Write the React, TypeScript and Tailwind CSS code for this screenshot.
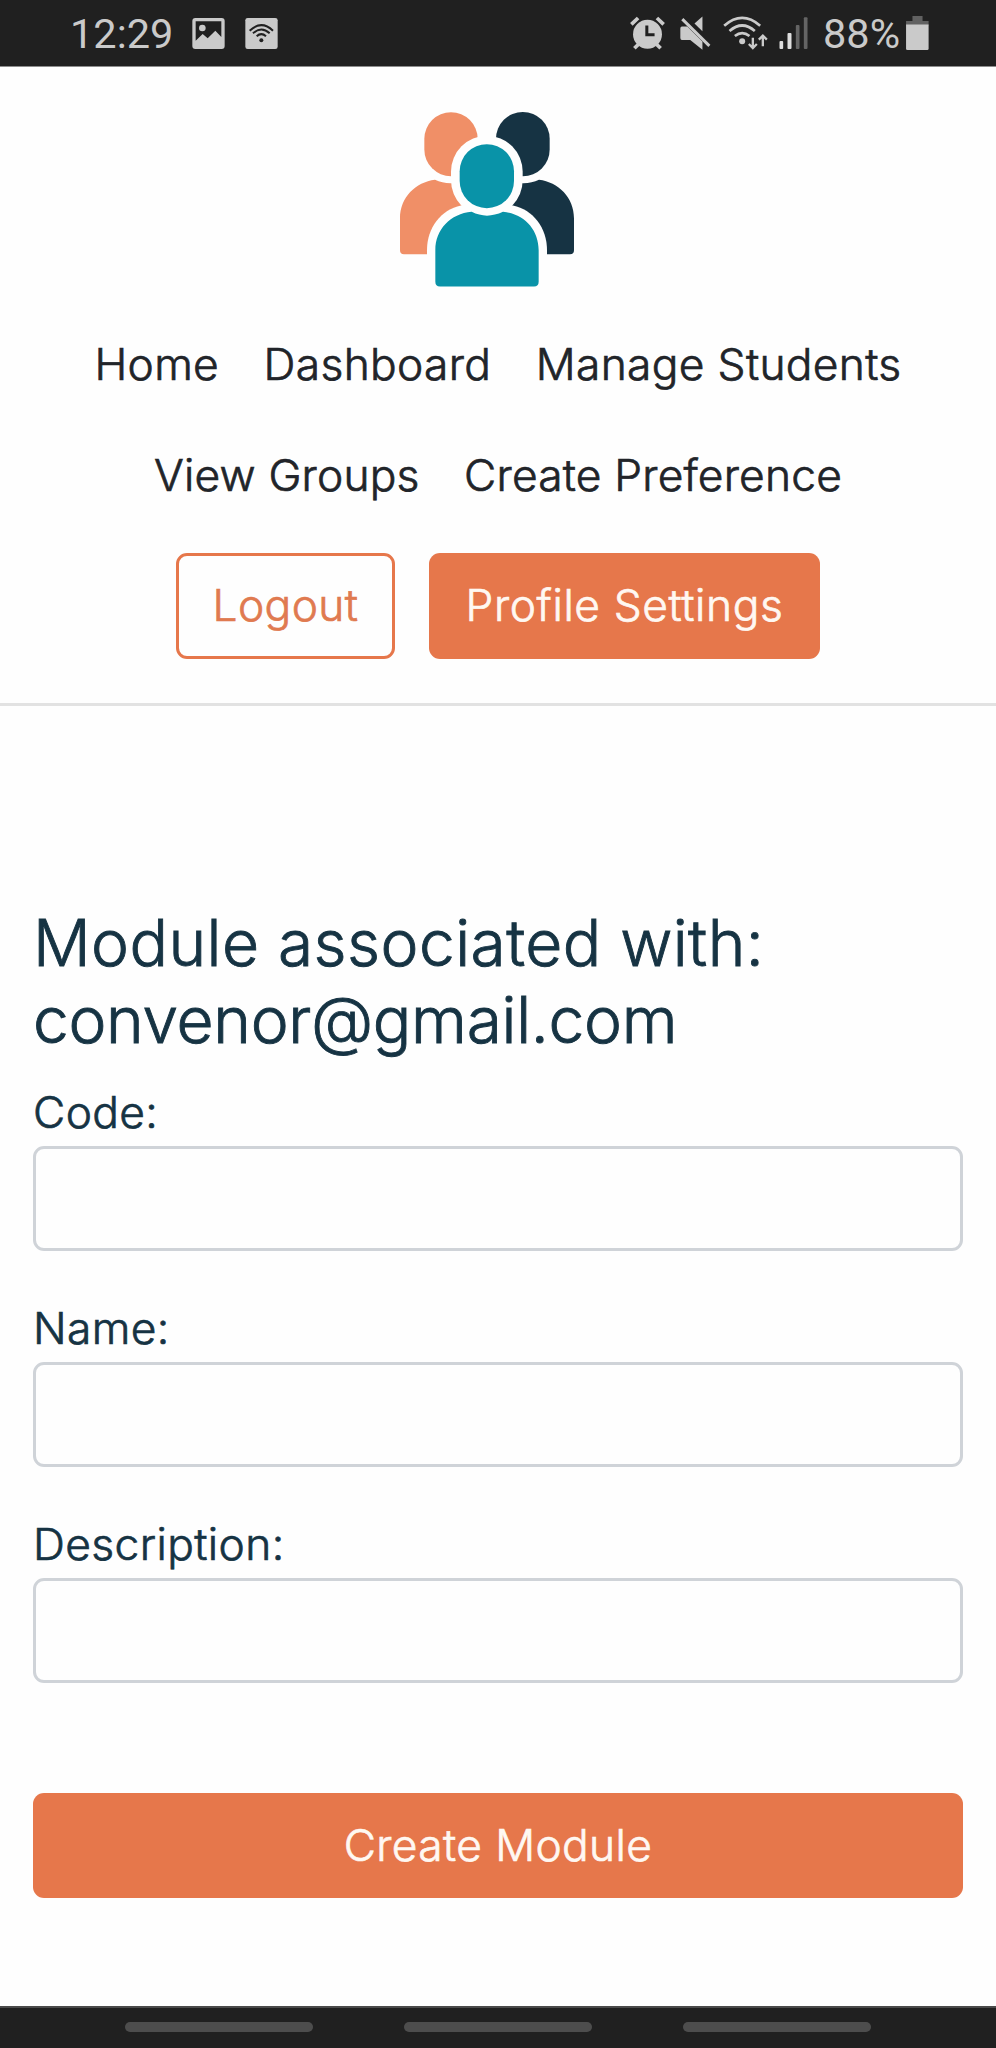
const navRows = [
  { items: ["Home", "Dashboard", "Manage Students"], tracking: "tracking-[0.35px]" },
  { items: ["View Groups", "Create Preference"], tracking: "tracking-[0.2px]" },
];

const fields = ["Code:", "Name:", "Description:"];

function Logo() {
  return (
    <svg viewBox="60 66 522 524" className="h-[175px] w-[174px]" aria-hidden="true">
      <g fill="#f08f67">
        <path d="M133 146a80 80 0 0 1 160 0v32a80 80 0 0 1-160 0z" />
        <path d="M60 385C60 322 107 276 165 269Q190 281 220 279L300 380L200 492H72Q60 492 60 480Z" />
      </g>
      <g fill="#163343">
        <path d="M348 146a80.500 80.500 0 0 1 161 0v32a80.500 80.500 0 0 1-161 0z" />
        <path d="M582 385C582 322 535 276 477 269Q452 281 422 279L342 380L442 492H570Q582 492 582 480Z" />
      </g>
      <path fill="#fefefe" d="M141 600V480C141 412 183 359 243 346H399C459 359 501 412 501 480V600Z" />
      <rect x="213" y="137" width="215" height="241" rx="107.500" fill="#fefefe" />
      <rect x="239" y="162" width="163" height="192" rx="81.500" fill="#0993a8" />
      <path
        fill="#0993a8"
        d="M166 480C166 418 211 371 275 365Q320 388 369 365C432 371 476 418 476 480V575Q476 589 462 589H180Q166 589 166 575Z"
      />
    </svg>
  );
}

function ImageIcon() {
  return (
    <svg viewBox="0 0 97 93" className="h-[31px] w-[33px]" aria-hidden="true">
      <path
        fill="#cacaca"
        fillRule="evenodd"
        d="M9 0H88Q97 0 97 9V84Q97 93 88 93H9Q0 93 0 84V9Q0 0 9 0ZM10 10V68L31 48L46 61L69 38L87 57V10Z"
      />
      <circle cx="30" cy="30" r="10" fill="#cacaca" />
    </svg>
  );
}

function WifiBadgeIcon() {
  return (
    <svg viewBox="0 0 97 93" className="h-[31px] w-[33px]" aria-hidden="true">
      <rect width="97" height="93" rx="7" fill="#cacaca" />
      <g fill="none" stroke="#202020" strokeWidth="6">
        <path d="M13 38Q48 5 83 38" />
        <path d="M23 46Q48 23 73 46" />
        <path d="M34 55Q48 42 62 55" />
      </g>
      <circle cx="48" cy="67" r="6" fill="#202020" />
    </svg>
  );
}

function AlarmIcon() {
  return (
    <svg viewBox="59 47 104 101" className="h-[34px] w-[35px]" aria-hidden="true">
      <circle cx="111" cy="101" r="43" fill="#cacaca" />
      <g stroke="#cacaca" strokeWidth="11">
        <path d="M63 72L83 53M159 72L139 53" />
        <path d="M85 130L72 143M137 130L150 143" />
      </g>
      <path d="M109 75V103H132" fill="none" stroke="#202020" strokeWidth="9" />
    </svg>
  );
}

function MuteIcon() {
  return (
    <svg viewBox="208 46 94 102" className="h-[34px] w-[31px]" aria-hidden="true">
      <path fill="#cacaca" d="M214 77H230L276 123V148L239 118H214Q209 118 209 112V83Q209 77 214 77Z" />
      <path fill="#cacaca" d="M276 47V92L252 68Z" />
      <path d="M215 55L297 136" stroke="#cacaca" strokeWidth="9" />
    </svg>
  );
}

function WifiIcon() {
  return (
    <svg viewBox="338 46 134 102" className="h-[34px] w-[45px]" aria-hidden="true">
      <g fill="none" stroke="#cacaca" strokeWidth="8">
        <path d="M341 75Q395 28 449 75" />
        <path d="M357 91Q395 58 433 91" />
        <path d="M373 106Q395 89 417 106" />
      </g>
      <circle cx="395" cy="122" r="9" fill="#cacaca" />
      <g fill="none" stroke="#cacaca" strokeWidth="7">
        <path d="M427 111V141M415 130L427 142L439 130" />
        <path d="M457 137V106M445 117L457 105L469 117" />
      </g>
    </svg>
  );
}

function SignalIcon() {
  return (
    <svg viewBox="506 52 86 96" className="h-[32px] w-[29px]" aria-hidden="true">
      <rect x="507" y="124" width="11" height="24" rx="3" fill="#dedede" />
      <rect x="531" y="100" width="12" height="48" rx="3" fill="#dedede" />
      <rect x="556" y="76" width="11" height="72" rx="3" fill="#646464" />
      <rect x="580" y="53" width="11" height="95" rx="3" fill="#646464" />
    </svg>
  );
}

function BatteryIcon() {
  return (
    <svg viewBox="884 47 68 101" className="h-[34px] w-[23px]" aria-hidden="true">
      <path fill="#616161" d="M903 47H933V62H951V75H884V62H903Z" />
      <path fill="#cacaca" d="M884 72H951V144Q951 148 947 148H888Q884 148 884 144Z" />
    </svg>
  );
}

function StatusBar() {
  return (
    <div className="flex h-[67px] shrink-0 items-center border-b border-[#8d8d8d] bg-[#202020] pr-[67px] pl-[70px] font-[Roboto,sans-serif] text-[#cacaca]">
      <span className="w-[122px] pt-[2px] text-[41.500px] leading-none">12:29</span>
      <div className="flex gap-[20px]">
        <ImageIcon />
        <WifiBadgeIcon />
      </div>
      <div className="ml-auto flex items-center">
        <AlarmIcon />
        <span className="ml-[15px] flex"><MuteIcon /></span>
        <span className="ml-[12px] flex"><WifiIcon /></span>
        <span className="ml-[11px] flex"><SignalIcon /></span>
        <span className="ml-[15px] w-[83px] pt-[2px] text-[41.500px] leading-none whitespace-nowrap">88%</span>
        <BatteryIcon />
      </div>
    </div>
  );
}

export default function App() {
  return (
    <div className="flex h-[2048px] w-[996px] flex-col overflow-hidden bg-[#fefefe] font-[Inter,sans-serif] text-[44.270px] font-light tracking-[0.4px] [-webkit-text-stroke:0.7px_currentColor]">
      <div className="shrink-0 font-normal tracking-normal [-webkit-text-stroke:0px]">
        <StatusBar />
      </div>
      <header className="flex h-[639px] shrink-0 flex-col border-b-[3px] border-[#e2e2e2] pt-[45px]">
        <div className="pl-[400px]">
          <Logo />
        </div>
        <nav className="mt-[22px] text-[#212429]">
          {navRows.map((row) => (
            <div
              key={row.items[0]}
              className={`flex h-[110.500px] items-center justify-center gap-[44.500px] ${row.tracking}`}
            >
              {row.items.map((item) => (
                <a key={item} href="#" className="whitespace-nowrap">
                  {item}
                </a>
              ))}
            </div>
          ))}
        </nav>
        <div className="mt-[23px] flex justify-center gap-[34px]">
          <button className="h-[106px] w-[219px] rounded-[11px] border-[3px] border-[#e6774b] pb-[2px] text-[#e07a50]">
            Logout
          </button>
          <button className="h-[106px] w-[391px] rounded-[11px] bg-[#e6774b] pb-[2px] tracking-[0.6px] text-[#fff8f2]">
            Profile Settings
          </button>
        </div>
      </header>
      <main className="flex grow flex-col px-[33px] pt-[199px] text-[#163343]">
        <h1 className="text-[64px] leading-[76.500px] tracking-normal [-webkit-text-stroke:0.9px_currentColor]">
          <span className="tracking-[0.45px]">Module associated with:</span>
          <br />
          <span className="tracking-[-0.3px]">convenor@gmail.com</span>
        </h1>
        <form className="mt-[21px] flex flex-col">
          {fields.map((label) => (
            <label key={label} className="flex h-[215.800px] flex-col">
              <span className="h-[67px] leading-[66px]">{label}</span>
              <input className="h-[105px] w-full rounded-[11px] border-[3px] border-[#cfd3d8] bg-[#fefefe]" />
            </label>
          ))}
          <button
            type="button"
            className="mt-[67px] h-[105px] w-full rounded-[11px] bg-[#e6774b] pb-[2px] text-[#fff8f2]"
          >
            Create Module
          </button>
        </form>
      </main>
      <footer className="flex h-[42px] shrink-0 justify-center gap-[91px] border-t-[2px] border-[#4a4a4a] bg-[#202020] pt-[14px]">
        <span className="h-[10px] w-[188px] rounded-[5px] bg-[#4d4d4d]" />
        <span className="h-[10px] w-[188px] rounded-[5px] bg-[#4d4d4d]" />
        <span className="h-[10px] w-[188px] rounded-[5px] bg-[#4d4d4d]" />
      </footer>
    </div>
  );
}
